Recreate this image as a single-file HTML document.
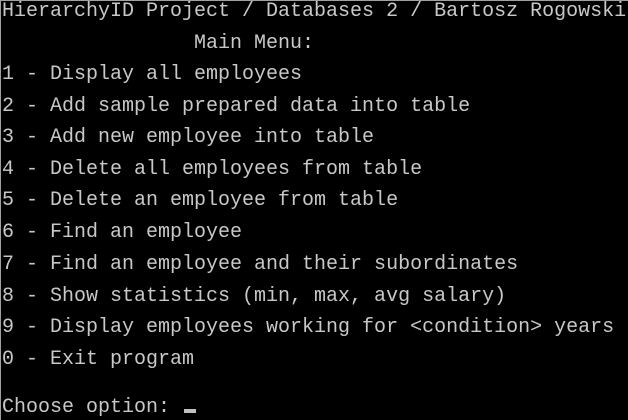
<!DOCTYPE html>
<html><head><style>
html,body{margin:0;padding:0;background:#000;}
body{width:628px;height:420px;position:relative;overflow:hidden;border-top:1px solid #a0a0a0;border-left:1px solid #a0a0a0;box-sizing:border-box;}
.l{position:absolute;left:1px;font-family:"Liberation Mono",monospace;font-size:20px;line-height:24px;color:#c8c8c8;white-space:pre;}
.cur{position:absolute;left:183px;top:408px;width:12px;height:4px;background:#c0c0c0;}
</style></head><body>
<div class="l" style="top:-1px">HierarchyID Project / Databases 2 / Bartosz Rogowski</div>
<div class="l" style="top:31px">                Main Menu:</div>
<div class="l" style="top:62px">1 - Display all employees</div>
<div class="l" style="top:94px">2 - Add sample prepared data into table</div>
<div class="l" style="top:125px">3 - Add new employee into table</div>
<div class="l" style="top:157px">4 - Delete all employees from table</div>
<div class="l" style="top:188px">5 - Delete an employee from table</div>
<div class="l" style="top:220px">6 - Find an employee</div>
<div class="l" style="top:252px">7 - Find an employee and their subordinates</div>
<div class="l" style="top:284px">8 - Show statistics (min, max, avg salary)</div>
<div class="l" style="top:315px">9 - Display employees working for &lt;condition&gt; years</div>
<div class="l" style="top:347px">0 - Exit program</div>
<div class="l" style="top:395px">Choose option: </div>
<div class="cur"></div>
</body></html>
